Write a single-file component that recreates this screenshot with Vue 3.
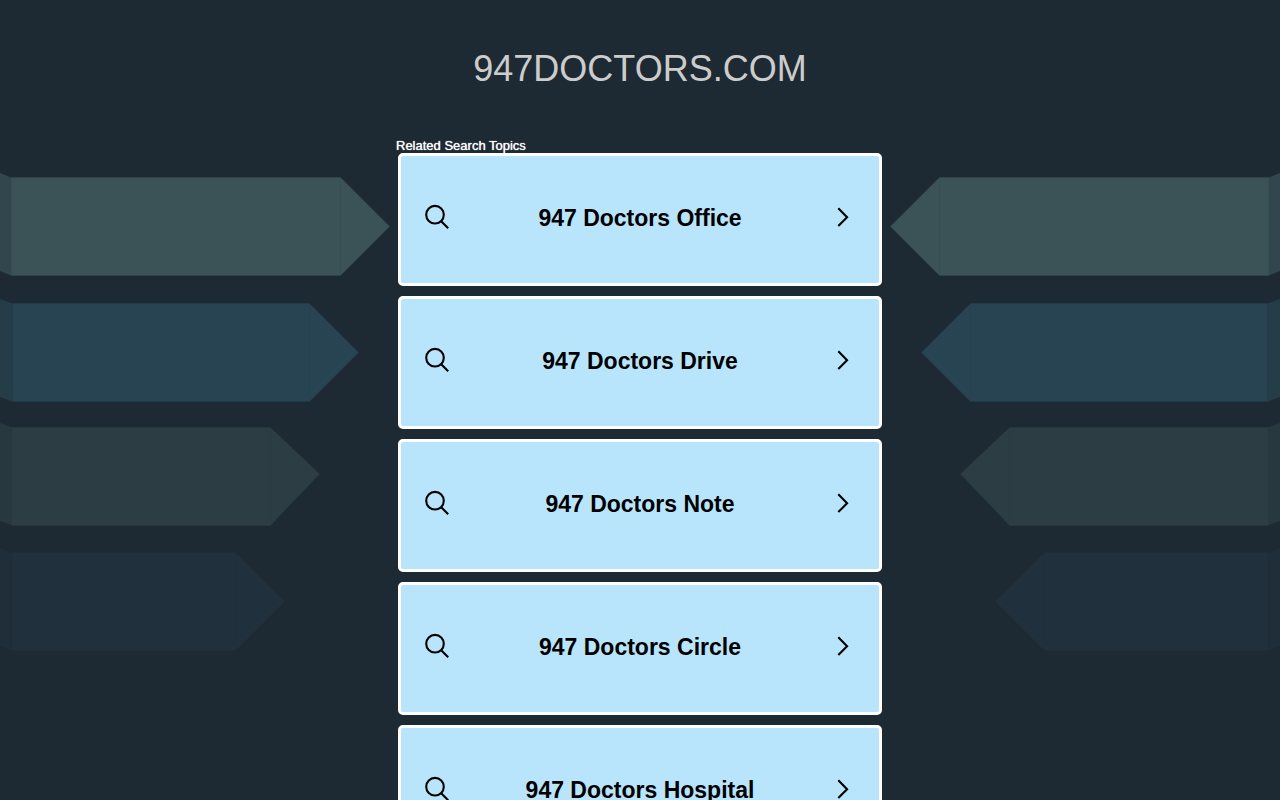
<template>
<div class="page">
  <svg
    v-for="side in ['left', 'right']"
    :key="side"
    class="ribbons"
    :class="side"
    viewBox="0 0 400 660"
    aria-hidden="true"
  >
    <g v-for="ribbon in ribbons" :key="ribbon.top">
      <polygon :points="foldPoints(ribbon)" :fill="ribbon.fold" />
      <polygon :points="bodyPoints(ribbon)" :fill="ribbon.fill" :stroke="ribbon.fold" stroke-width="0.5" />
      <path :d="`M${ribbon.end} ${ribbon.top}v98`" :stroke="ribbon.fold" stroke-width="0.4" />
    </g>
  </svg>

  <header class="header">
    <h1>947DOCTORS.COM</h1>
  </header>

  <main class="content">
    <h2>Related Search Topics</h2>
    <ul class="topics">
      <li v-for="topic in topics" :key="topic">
        <a href="#" class="topic">
          <svg class="search" viewBox="0 -1 24 28" aria-hidden="true">
            <circle cx="10" cy="9.7" r="8.8" />
            <path d="M16.2 16.2l7 7" />
          </svg>
          <span>{{ topic }}</span>
          <svg class="arrow" viewBox="0 -1 12 28" aria-hidden="true">
            <path d="M1.3 3.3l8.8 8.9l-8.8 8.9" />
          </svg>
        </a>
      </li>
    </ul>
  </main>
</div>
</template>


<script setup>
import { ref } from 'vue'

const topics = ref([
  '947 Doctors Office',
  '947 Doctors Drive',
  '947 Doctors Note',
  '947 Doctors Circle',
  '947 Doctors Hospital',
]);

const ribbons = [
  { start: 11, end: 340.5, top: 177.5, tip: 226.5, fill: '#3b5357', fold: '#32464d' },
  { start: 12.5, end: 309.5, top: 303.5, tip: 352.5, fill: '#284452', fold: '#253c49' },
  { start: 12, end: 270.5, top: 427.5, tip: 474, fill: '#2c3e44', fold: '#28383f' },
  { start: 12, end: 236, top: 552.5, tip: 601.5, fill: '#20313d', fold: '#1f2e39' },
];

function bodyPoints({ start, end, top, tip }) {
  return `${start},${top} ${end},${top} ${end + 49},${tip} ${end},${top + 98} ${start},${top + 98}`;
}

function foldPoints({ start, top }) {
  return `0,${top - 4.5} ${start},${top} ${start},${top + 98} 0,${top + 93.5}`;
}
</script>

<style>
body {
  margin: 0;
  background: #1e2a33;
}
</style>

<style scoped>
.page {
  position: relative;
  min-height: 100vh;
  overflow: hidden;
  background: #1e2a33;
  font-family: "Liberation Sans", Arial, sans-serif;
}

.ribbons {
  position: absolute;
  top: 0;
  width: 400px;
  height: 660px;
}
.ribbons.left {
  left: 0;
}
.ribbons.right {
  right: 0;
  transform: scaleX(-1);
}

.header {
  padding: 48px 16px;
  text-align: center;
}
h1 {
  margin: 0;
  color: #cccccc;
  font-size: 36px;
  font-weight: normal;
  line-height: 41px;
}

.content {
  position: relative;
  box-sizing: border-box;
  width: 100%;
  max-width: 488px;
  margin: 0 auto;
}
h2 {
  margin: 0;
  padding-top: 1px;
  color: #ffffff;
  font-size: 13px;
  font-weight: normal;
  line-height: 15px;
  text-shadow: 0 0 1px #ffffff;
}

.topics {
  display: flex;
  flex-direction: column;
  gap: 10px;
  margin: 0;
  padding: 0 2px 10px;
  list-style: none;
}
.topic {
  display: flex;
  align-items: center;
  box-sizing: border-box;
  min-height: 133px;
  padding: 0 30px 3px 24px;
  border: 3px solid #ffffff;
  border-radius: 5px;
  background: #b8e5fc;
  color: #000000;
  font-size: 23px;
  font-weight: bold;
  line-height: 28px;
  text-decoration: none;
}
.topic span {
  flex: 1;
  padding-right: 6px;
  text-align: center;
}
.topic:hover {
  background: #d2effd;
}
.topic svg {
  flex: none;
  height: 28px;
  fill: none;
  stroke: #000000;
  stroke-width: 2.1;
}
.search {
  width: 24px;
}
.arrow {
  width: 12px;
}
</style>
